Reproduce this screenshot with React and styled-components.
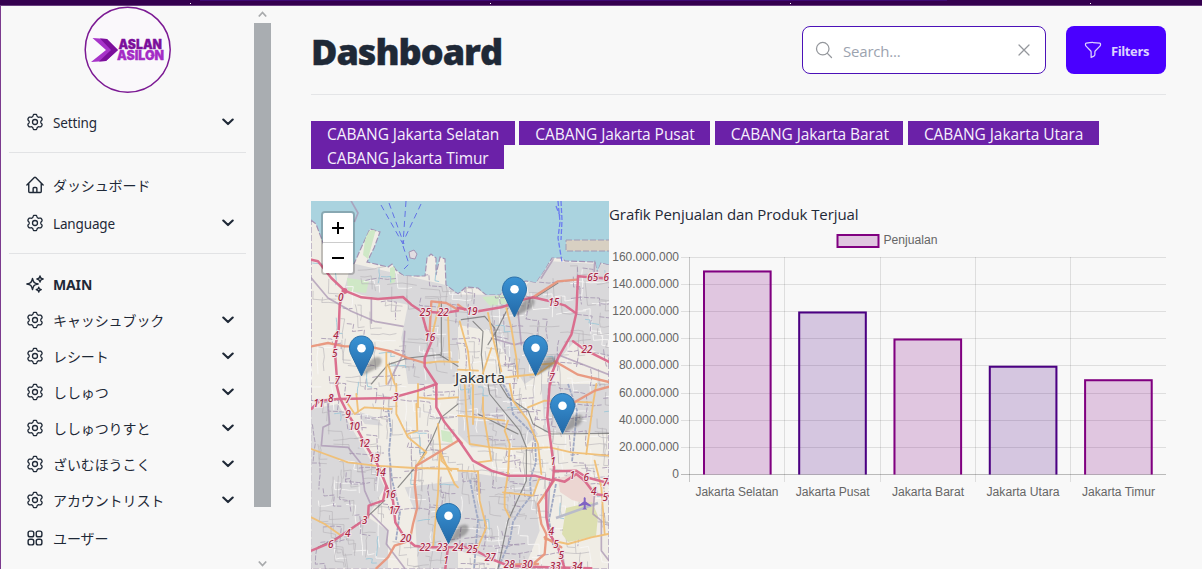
import React from 'react';
import styled, { createGlobalStyle } from 'styled-components';
import {
  HiOutlineHome,
  HiOutlineSparkles,
  HiOutlineSquares2X2,
  HiOutlineFunnel,
  HiOutlineMagnifyingGlass,
  HiOutlineXMark,
} from 'react-icons/hi2';

const GlobalStyle = createGlobalStyle`
  * { box-sizing: border-box; }
  body {
    margin: 0;
    overflow: hidden;
    background: #f8f8f8;
    color: #1f2937;
    font-family: 'Open Sans', 'Noto Sans', 'Noto Sans CJK JP', sans-serif;
  }
  button, input { font: inherit; }
`;

const Page = styled.div`
  display: flex;
  flex-direction: column;
  height: 569px;
  overflow: hidden;
`;

const TopStrip = styled.header`
  flex: none;
  height: 6px;
  background:
    radial-gradient(circle at 0.5px 0.5px, #ffffff 0.6px, transparent 0.9px) 190px 3px / 300px 6px repeat-x,
    linear-gradient(#3f0a74, #3f0a74) 200px 0 / 747px 1px no-repeat,
    #35004f;
  border-bottom: 1px solid #6a3f80;
`;

const Body = styled.div`
  display: flex;
  flex: 1;
  min-height: 0;
  border-left: 1px solid #7b3a8e;
`;

const Sidebar = styled.aside`
  display: flex;
  flex-direction: column;
  width: 253px;
  padding: 0 8px;
`;

const LogoBox = styled.div`
  display: flex;
  justify-content: center;
  height: 92px;
  svg { display: block; }
`;

const Divider = styled.hr`
  width: 100%;
  height: 1px;
  margin: ${(p) => p.$margin};
  border: 0;
  background: #e2e3e5;
`;

const NavRow = styled.a`
  display: flex;
  align-items: center;
  flex: none;
  height: ${(p) => p.$height || 36}px;
  padding: 0 12px 0 16px;
  font-family: ${(p) => (p.$cjk ? "'Noto Sans CJK JP'" : "'Noto Sans'")}, sans-serif;
  font-size: ${(p) => (p.$cjk || p.$bold ? 14 : 13.5)}px;
  font-weight: ${(p) => (p.$bold ? 700 : 400)};
  letter-spacing: ${(p) => (p.$cjk ? '-0.1px' : '-0.15px')};
`;

const NavIcon = styled.span`
  display: flex;
  flex: none;
  align-items: center;
  justify-content: center;
  width: 20px;
  svg { width: ${(p) => p.$size || 20}px; height: ${(p) => p.$size || 20}px; stroke-width: 1.7; }
`;

const NavText = styled.span`
  flex: 1;
  padding: ${(p) => (p.$cjk ? '0 0 1px 8px' : '1px 0 0 8px')};
  white-space: nowrap;
`;

const ScrollTrack = styled.div`
  display: flex;
  flex-direction: column;
  align-items: center;
  justify-content: space-between;
  width: 17px;
  padding: 4px 0 1px;
  color: #a8aaac;
  svg { display: block; }
`;

const ScrollThumb = styled.div`
  width: 17px;
  height: 484px;
  margin-top: 5px;
  margin-bottom: auto;
  background: #a9adb1;
`;

const Main = styled.main`
  flex: 1;
  min-width: 0;
  padding: 20px 36px 0 40px;
`;

const TitleBar = styled.div`
  display: flex;
  align-items: flex-start;
  height: 69px;
  border-bottom: 1px solid #e4e5e7;
`;

const Title = styled.h1`
  flex: 1;
  margin: 0;
  font-size: 36px;
  line-height: 52px;
  font-weight: 800;
  letter-spacing: -1px;
  -webkit-text-stroke: 0.4px #1f2937;
`;

const SearchBox = styled.label`
  display: flex;
  align-items: center;
  width: 244px;
  height: 48px;
  margin-right: 20px;
  padding: 0 11px;
  border: 1px solid #4c12b8;
  border-radius: 8px;
  background: #ffffff;
  color: #94979c;
  svg { flex: none; width: 20px; height: 20px; stroke-width: 1.5; }
`;

const SearchInput = styled.input`
  flex: 1;
  min-width: 0;
  padding: 2px 8px 0 9px;
  border: 0;
  outline: 0;
  background: transparent;
  font-size: 15px;
  letter-spacing: -0.2px;
  &::placeholder { color: #9ca3af; opacity: 1; }
`;

const FilterButton = styled.button`
  display: flex;
  align-items: center;
  gap: 8px;
  width: 100px;
  height: 48px;
  padding: 0 17px;
  border: 0;
  border-radius: 8px;
  background: #4a00ff;
  color: #dcd2ff;
  font-size: 13px;
  font-weight: 700;
  letter-spacing: -0.4px;
  svg { flex: none; width: 20px; height: 20px; }
  span { padding-top: 1px; }
`;

const BranchList = styled.div`
  display: flex;
  flex-wrap: wrap;
  column-gap: 4.5px;
  margin-top: 26px;
  margin-bottom: 32px;
`;

const Branch = styled.div`
  width: ${(p) => p.$width}px;
  height: 24px;
  padding: 2px 0 0 16px;
  overflow: hidden;
  background: #6b21a8;
  color: #f6effc;
  font-size: 15.5px;
  line-height: 23px;
  letter-spacing: -0.07px;
  white-space: nowrap;
`;

const Panels = styled.div`
  display: flex;
`;

const MapPanel = styled.div`
  position: relative;
  flex: none;
  width: 298px;
  height: 368px;
  overflow: hidden;
  svg { display: block; }
`;

const ZoomControl = styled.div`
  position: absolute;
  top: 10px;
  left: 10px;
  border: 2px solid rgba(0, 0, 0, 0.2);
  border-radius: 4px;
  background-clip: padding-box;
`;

const ZoomButton = styled.button`
  display: flex;
  align-items: center;
  justify-content: center;
  width: 30px;
  height: 30px;
  padding: 0;
  border: 0;
  border-bottom: ${(p) => (p.$first ? '1px solid #ccc' : '0')};
  border-radius: ${(p) => (p.$first ? '2px 2px 0 0' : '0 0 2px 2px')};
  background: #fff;
`;

const ChartPanel = styled.section`
  flex: 1;
  min-width: 0;
  svg { display: block; }
`;

const ChartTitle = styled.div`
  height: 27px;
  padding-top: 1px;
  font-size: 15px;
  line-height: 24px;
  letter-spacing: -0.07px;
  white-space: nowrap;
`;

const Logo = () => (
  <svg width="88" height="88" viewBox="0 0 88 88">
    <circle cx="43.700" cy="43.700" r="42.500" fill="#faf8fb" stroke="#7c1a94" strokeWidth="1.500" />
    <path d="M8.500 32 L23 33 L34 44 L22 55 L7 56 L22 44 Z" fill="#a733c9" />
    <path d="M16 32.500 L23 33 L34 44 L22 55 L15 55.500 L27 44 Z" fill="#7c109b" />
    <g fontFamily="Inter, sans-serif" fontWeight="900" fontSize="12.500" strokeWidth="0.300">
      <text x="34.500" y="43" textLength="43.500" lengthAdjust="spacingAndGlyphs" fill="#7c109b" stroke="#7c109b">ASLAN</text>
      <text x="33" y="53.800" textLength="47" lengthAdjust="spacingAndGlyphs" fill="#a42cc6" stroke="#a42cc6">ASILON</text>
    </g>
    <rect x="66.500" y="48.700" width="4" height="1.200" fill="#a42cc6" />
  </svg>
);

// Six rounded teeth, the first pointing straight up.
const COG_OUTLINE = Array.from({ length: 96 }, (_, i) => {
  const a = (i / 96) * Math.PI * 2;
  const wave = -Math.cos(6 * a);
  const r = 6.7 + 1.05 * Math.tanh(1.6 * wave + 0.3) ;
  return `${i ? 'L' : 'M'}${(10 + r * Math.cos(a)).toFixed(2)} ${(10 + r * Math.sin(a)).toFixed(2)}`;
}).join('') + 'Z';

const Cog = () => (
  <svg viewBox="0 0 20 20" fill="none" stroke="currentColor" strokeLinejoin="round">
    <path d={COG_OUTLINE} strokeWidth="1.300" />
    <circle cx="10" cy="10" r="2.500" strokeWidth="1.300" />
  </svg>
);

const Chevron = () => (
  <svg width="12" height="8" viewBox="0 0 12 8" fill="none" stroke="#1f2937" strokeWidth="2.100" strokeLinecap="round" strokeLinejoin="round">
    <path d="M1.300 1.600 L6 6.100 L10.700 1.600" />
  </svg>
);

const NAV = [
  { icon: Cog, text: 'Setting', more: true, height: 48 },
  { rule: '6px 0 13px' },
  { icon: HiOutlineHome, text: 'ダッシュボード', cjk: true, height: 38 },
  { icon: Cog, text: 'Language', more: true, height: 38 },
  { rule: '11px 0 12px' },
  { icon: HiOutlineSparkles, text: 'MAIN', bold: true },
  { icon: Cog, text: 'キャッシュブック', cjk: true, more: true },
  { icon: Cog, text: 'レシート', cjk: true, more: true },
  { icon: Cog, text: 'ししゅつ', cjk: true, more: true },
  { icon: Cog, text: 'ししゅつりすと', cjk: true, more: true },
  { icon: Cog, text: 'ざいむほうこく', cjk: true, more: true },
  { icon: Cog, text: 'アカウントリスト', cjk: true, more: true },
  { icon: HiOutlineSquares2X2, text: 'ユーザー', cjk: true, height: 40 },
];

const BRANCHES = [
  { name: 'CABANG Jakarta Selatan', width: 203.8 },
  { name: 'CABANG Jakarta Pusat', width: 191 },
  { name: 'CABANG Jakarta Barat', width: 188.6 },
  { name: 'CABANG Jakarta Utara', width: 191 },
  { name: 'CABANG Jakarta Timur', width: 193 },
];

const COAST =
  'M311,220 L316,224 L322,240 L330,262 L346,268 L354,264 L362,246 L370,229 L380,232 L374,248 L367,262 L388,267 L392,264 L396,270 L404,276 L425,276 L427,258 L431,254 L436,258 L436,275 L440,257 L445,259 L446,285 L458,294 L466,287 L478,288 L486,295 L501,295 L503,287 L526,281 L536,283 L545,270 L552,258 L562,258 L565,261 L595,262 L597,273 L601,263 L609,265 L609,569 L311,569 Z';

// Deterministic side-street network drawn under the main roads.
const makeStreets = (seed, count, step) => {
  let s = seed;
  const rnd = () => {
    s = (s * 16807) % 2147483647;
    return s / 2147483647;
  };
  let d = '';
  for (let i = 0; i < count; i += 1) {
    let x = 311 + rnd() * 298;
    let y = 262 + rnd() * 307;
    d += `M${x.toFixed(1)},${y.toFixed(1)}`;
    let vertical = rnd() > 0.5;
    for (let k = 0; k < 4; k += 1) {
      const along = (rnd() * 0.7 + 0.4) * step;
      const across = (rnd() - 0.5) * step * 0.3;
      x += vertical ? across : along;
      y += vertical ? along : across;
      if (rnd() > 0.6) vertical = !vertical;
      d += `L${x.toFixed(1)},${y.toFixed(1)}`;
    }
  }
  return d;
};

const STREETS_LIGHT = makeStreets(71, 110, 10);
const STREETS_GREY = makeStreets(913, 260, 9);
const STREETS_MAUVE = makeStreets(4021, 130, 11);
const STREAMS = makeStreets(555, 34, 6);

// Each sheet covers a quarter of the map; its coordinates are thirds of a pixel.
const SHEETS = [
  {
    x: 308,
    y: 198,
    grey: ['M130,195 L300,235 L410,260 L450,290 L450,558 L300,558 L280,420 L300,320 L160,290 L110,270 Z'],
    rail: ['M450,505 L395,470 L300,480 L240,500 L190,558', 'M400,310 L400,470'],
    border: ['M130,10 L150,45 L140,70', 'M10,240 L60,300 L130,340 L200,370 L285,385', 'M290,400 L285,470 L240,558', 'M190,300 L190,375'],
    yellow: ['M235,465 L235,558', 'M350,495 L395,490 L450,492', 'M395,315 L375,400', 'M420,350 L425,490', 'M240,500 L260,558'],
    orange: ['M10,445 L60,435 L110,445 L180,445 L250,460 L300,480 L350,495', 'M365,400 L370,310 L415,315 L450,335'],
    red: ['M10,185 L30,190 L70,240 L110,278 L160,298 L210,303 L285,297 L310,320 L340,340 L405,345 L450,338', 'M108,278 L95,320 L92,400 L80,450 L88,558', 'M340,340 L355,395 L375,420 L350,480 L350,505 L385,558'],
    labels: [['0', 98, 308], ['25', 352, 353], ['22', 406, 353], ['16', 365, 428], ['4', 84, 424], ['5', 80, 477], ['7', 88, 558]],
  },
  {
    x: 458,
    y: 198,
    grey: ['M0,290 L80,290 L205,260 L280,190 L453,200 L453,480 L350,430 L290,500 L200,558 L100,400 L0,380 Z'],
    rail: ['M10,365 L80,355 L110,390 L130,558', 'M150,330 L115,400 L90,440', 'M230,300 L300,255', 'M45,370 L75,400 L70,470 L80,558'],
    border: ['M100,420 L170,440 L210,430', 'M285,185 L250,240', 'M410,190 L408,240', 'M300,470 L453,530', 'M180,340 L190,440'],
    yellow: ['M145,330 L160,390 L175,480 L180,540', 'M5,370 L30,460 L40,558', 'M90,345 L105,420 L130,520', 'M0,515 L60,518', 'M240,500 L300,495', 'M120,540 L240,528 L285,495', 'M70,540 L100,450'],
    orange: ['M225,298 L260,275 L300,250 L355,245', 'M0,320 L20,335', 'M290,490 L360,530 L453,552'],
    red: ['M0,330 L60,340 L130,328 L205,302 L225,298 L270,308 L320,322 L353,345', 'M453,242 L360,235 L355,345 L340,410 L300,480 L280,530 L277,558', 'M345,430 L380,455 L453,492'],
    labels: [['19', 42, 352], ['15', 287, 324], ['65', 404, 249], ['6', 445, 249], ['22', 387, 466], ['7', 282, 550]],
  },
  {
    x: 308,
    y: 384,
    grey: ['M10,75 L90,60 L130,130 L200,250 L230,310 L180,400 L240,440 L240,553 L10,553 Z', 'M145,80 L200,100 L225,125 L170,120 Z', 'M290,310 L450,290 L450,553 L330,553 L320,380 Z'],
    rail: ['M450,60 L400,100 L370,170 L330,240 L270,310', 'M230,350 L170,405 L100,455 L30,490'],
    border: ['M60,60 L65,120 L45,130 L40,185 L120,190 L160,240 L170,320 L190,365', 'M190,390 L240,440 L235,480 L290,553', 'M245,250 L250,330'],
    yellow: ['M10,195 L120,235 L200,245 L320,252 L450,255', 'M110,45 L140,90 L170,70 L250,75', 'M265,0 L265,90 L300,160 L355,205 L325,245', 'M330,0 L330,70', 'M395,200 L390,330 L375,490', 'M10,400 L50,420 L100,455', 'M395,200 L440,300 L450,310', 'M330,40 L380,45 L450,40', 'M145,30 L150,80', 'M390,120 L400,230 L430,260', 'M325,60 L328,140 L300,150'],
    orange: ['M450,170 L400,200 L325,245 L320,300 L328,370 L315,420 L305,470 L260,485 L240,520 L205,553'],
    red: ['M85,0 L95,40 L120,90 L150,140 L180,195 L205,235 L225,280 L235,305 L255,350 L262,415 L290,460 L320,485 L350,490 L450,490', 'M10,75 L35,50 L90,45 L250,42 L330,20 L385,0', 'M385,0 L385,70 L410,115 L450,165', 'M10,500 L70,475 L165,410 L180,400 L182,365 L225,350 L235,305', 'M420,490 L412,553'],
    labels: [['11', 32, 68], ['8', 68, 54], ['7', 120, 56], ['3', 263, 51], ['9', 120, 101], ['10', 139, 137], ['12', 169, 188], ['13', 199, 235], ['14', 217, 275], ['16', 247, 341], ['17', 259, 390], ['3', 170, 419], ['4', 119, 459], ['6', 68, 491], ['20', 293, 474], ['22', 351, 500], ['23', 403, 500], ['1', 414, 541]],
  },
  {
    x: 458,
    y: 384,
    grey: ['M0,0 L140,0 L240,150 L200,190 L40,190 L0,150 Z', 'M250,0 L453,0 L453,150 L260,145 Z', 'M0,260 L130,280 L240,280 L230,340 L245,440 L200,553 L0,500 Z'],
    rail: ['M90,0 L95,30 L185,140 L205,190 L205,290 L150,410 L120,553', 'M125,0 L150,40 L210,80 L225,120 L280,150 L453,148', 'M60,90 L180,150'],
    border: ['M410,320 L405,390 L430,410 L430,500 L453,530', 'M275,295 L270,400'],
    yellow: ['M20,0 L25,90 L35,180 L100,190 L155,195 L270,190', 'M155,0 L165,50 L210,110 L240,180 L250,270', 'M150,110 L140,140 L155,180 L150,270 L140,330 L140,370 L155,400', 'M60,262 L65,350 L85,430 L55,500', 'M0,260 L60,262', 'M275,190 L340,205 L453,215', 'M210,70 L260,50 L400,55', 'M415,0 L405,60 L385,210', 'M135,325 L225,335 L245,280', 'M75,40 L75,80 L100,230 L60,235', 'M260,465 L330,480 L400,460 L450,450', 'M410,230 L430,310 L440,450', 'M0,95 L60,100 L140,110', 'M45,0 L45,120'],
    orange: ['M288,290 L240,360 L250,420 L265,450 L260,510 L210,553', 'M0,165 L12,178', 'M340,60 L410,20 L453,8', 'M260,460 L310,490', 'M150,542 L240,540'],
    red: ['M0,165 L45,230 L100,260 L150,275 L230,275 L285,290', 'M275,0 L268,100 L280,190 L288,250 L285,290 L265,325 L265,400 L275,450 L300,490 L320,553', 'M288,262 L355,260 L385,280 L453,298', 'M285,285 L320,293 L355,270 L380,290 L410,330 L453,336', 'M0,485 L45,495 L100,525 L150,545 L210,548 L400,553'],
    labels: [['24', 0, 500], ['25', 43, 506], ['27', 97, 532], ['28', 154, 551], ['30', 208, 552], ['1', 285, 243], ['1', 343, 286], ['6', 385, 291], ['7', 442, 307], ['4', 407, 333], ['5', 442, 350], ['4', 280, 453], ['5', 294, 492], ['5', 310, 526], ['33', 292, 558], ['34', 357, 558]],
  },
];

const STROKES = [
  ['border', '#aa96b3', 5, 0.75],
  ['rail', '#6d6d6d', 3.5, 0.75],
  ['yellow', '#f0bf74', 5.5, 0.95],
  ['orange', '#e8967c', 7, 0.95],
  ['red', '#d9688a', 7.5, 0.95],
];

const PINS = [
  [514.5, 317.5],
  [361.5, 376.5],
  [535.5, 376],
  [562.5, 434],
  [448.5, 544],
];

const Pin = ({ x, y }) => (
  <g transform={`translate(${x - 12.5} ${y - 41})`}>
    <path d="M12.500 40.500 L19 28 Q25 20 31 22 Q35 26 29 32 Z" fill="#333" opacity="0.350" filter="url(#pin-blur)" />
    <path
      d="M12.500 0.500 C5.800 0.500 0.500 5.900 0.500 12.600 C0.500 16.400 2 19 3.800 22.500 L12.500 40.500 L21.200 22.500 C23 19 24.500 16.400 24.500 12.600 C24.500 5.900 19.200 0.500 12.500 0.500 Z"
      fill="url(#pin-fill)"
      stroke="#2a6fa8"
    />
    <circle cx="12.500" cy="12.700" r="4.300" fill="#fff" />
  </g>
);

const CityMap = () => (
  <svg width="298" height="368" viewBox="311 201 298 368">
    <defs>
      <clipPath id="land">
        <path d={COAST} />
      </clipPath>
      <linearGradient id="pin-fill" x1="0" y1="0" x2="0" y2="1">
        <stop offset="0" stopColor="#3a93d4" />
        <stop offset="1" stopColor="#2369a8" />
      </linearGradient>
      <filter id="pin-blur" x="-20%" y="-20%" width="140%" height="140%">
        <feGaussianBlur stdDeviation="1.200" />
      </filter>
    </defs>
    <rect x="311" y="201" width="298" height="368" fill="#aad3df" />
    <path d={COAST} fill="#f0ede6" stroke="#a394b4" strokeWidth="1.200" strokeDasharray="6 2" />
    <g clipPath="url(#land)">
      {SHEETS.map((s) => (
        <g key={`${s.x}-${s.y}`} transform={`translate(${s.x} ${s.y}) scale(0.33333)`} fill="#d9d8da">
          {s.grey.map((d) => <path key={d} d={d} />)}
        </g>
      ))}
      <path d="M347,278 l22,3 l-3,12 l-18,-2z M441,430 l10,2 l2,11 l-11,-2z M482,297 l25,-2 l3,8 l-20,3z M390,268 l5,-2 v16 l-5,2z M366,232 l10,-3 l-8,30 l-5,-4z" fill="#cfe8c6" />
      <path d={STREETS_LIGHT} fill="none" stroke="#f7f6f5" strokeWidth="0.900" />
      <path d={STREETS_GREY} fill="none" stroke="#b5b2b7" strokeWidth="0.600" />
      <path d={STREETS_MAUVE} fill="none" stroke="#a394b0" strokeWidth="0.800" strokeDasharray="5 1.500" />
      <path d={STREAMS} fill="none" stroke="#9dc7d8" strokeWidth="0.900" />
      <path d="M558,478 l18,-4 l12,6 l8,14 l-2,12 l-22,-6 l-12,-8z" fill="#ecd6d2" />
      <path d="M566,508 l26,-6 l6,14 l-2,20 l-28,6 l-6,-8z" fill="#dcdfb0" />
      <path d="M556,518 L598,503" stroke="#b9bbc9" strokeWidth="2.500" />
      <path
        d="M503,384 L510,397 L513,414 L523,424 L535,436 L536,462 L530,480 L531,496 L520,510 L513,522 L510,540 L498,569 M388,408 L391,430 L389,452 L392,480 L400,512 L396,540 M568,384 L577,410 L572,462 M470,480 L478,520 L474,569 M556,484 L549,520 L553,545"
        fill="none"
        stroke="#a0a9c4"
        strokeWidth="1.800"
        strokeDasharray="4 1"
      />
    </g>
    <rect x="566" y="240" width="46" height="11" fill="#d8d0c2" stroke="#a09ab4" strokeDasharray="6 2" />
    <path d="M409,252 l5,-2 l3,4 l-2,5 l-5,-1z" fill="#e2dde2" stroke="#a394b4" />
    <path d="M381,205 L403,244 M389,203 L404,244 M406,201 L403,244 M421,204 L403,242 M403,246 L409,264 L403,270" fill="none" stroke="#6272e6" strokeDasharray="6 4" />
    <path d="M558,201 L560,222 L558,238 L562,262 M561,201 L562,220 L561,240 M556,206 L560,216" fill="none" stroke="#6b7cf0" strokeWidth="1.300" strokeDasharray="5 2" />
    {SHEETS.map((s) => (
      <g key={`${s.x}-${s.y}`} transform={`translate(${s.x} ${s.y}) scale(0.33333)`} fill="none" strokeLinejoin="round" strokeLinecap="round">
        {STROKES.map(([kind, color, width, opacity]) =>
          s[kind].map((d) => <path key={kind + d} d={d} stroke={color} strokeWidth={width} opacity={opacity} />),
        )}
      </g>
    ))}
    <circle cx="344.500" cy="291" r="3" fill="#d9688a" />
    {SHEETS.map((s) => (
      <g
        key={`${s.x}-${s.y}`}
        transform={`translate(${s.x} ${s.y}) scale(0.33333)`}
        fill="#a82745"
        stroke="#f0e4e8"
        strokeWidth="6"
        paintOrder="stroke"
        fontFamily="'Noto Sans', sans-serif"
        fontStyle="italic"
        fontSize="30"
        fontWeight="500"
        textAnchor="middle"
      >
        {s.labels.map(([t, x, y]) => <text key={`${t}-${x}-${y}`} x={x} y={y}>{t}</text>)}
      </g>
    ))}
    <path d="M584.500,497 l1.200,1 v3.500 l5,3.500 v1.500 l-5,-1.500 v3 l1.500,1.500 h-5 l1.500,-1.500 v-3 l-5,1.500 v-1.500 l5,-3.500 v-3.500z" fill="#8063c4" />
    <text x="480" y="383" textAnchor="middle" fontFamily="'Noto Sans', sans-serif" fontSize="14" textLength="50" lengthAdjust="spacingAndGlyphs" fill="#333" stroke="#f4f2ee" strokeWidth="2.500" paintOrder="stroke">
      Jakarta
    </text>
    {PINS.map(([x, y]) => <Pin key={`${x}-${y}`} x={x} y={y} />)}
  </svg>
);

const TICKS = [
  ['160.000.000', 257.5],
  ['140.000.000', 284.5],
  ['120.000.000', 311.5],
  ['100.000.000', 338.5],
  ['80.000.000', 365.5],
  ['60.000.000', 393.5],
  ['40.000.000', 420.5],
  ['20.000.000', 447.5],
  ['0', 474.5],
];

const BARS = [
  { label: 'Jakarta Selatan', x: 703, top: 270.4, mid: 737, width: 83 },
  { label: 'Jakarta Pusat', x: 798.2, top: 311.5, mid: 832.7, width: 74 },
  { label: 'Jakarta Barat', x: 893.5, top: 338.6, mid: 928, width: 72 },
  { label: 'Jakarta Utara', x: 988.8, top: 365.7, mid: 1023, width: 73 },
  { label: 'Jakarta Timur', x: 1084.1, top: 379.3, mid: 1118.5, width: 73 },
];

const SalesChart = () => (
  <svg width="557" height="280" viewBox="609 228 557 280" fontFamily="'Liberation Sans', sans-serif" fontSize="12" fill="#666">
    <rect x="837.500" y="235" width="41" height="12" fill="rgba(128,0,128,0.2)" stroke="#800080" strokeWidth="2" />
    <text x="883.500" y="244" textLength="54" lengthAdjust="spacingAndGlyphs">Penjualan</text>
    {TICKS.map(([label, y]) => (
      <g key={label}>
        <path d={`M681,${y} H1166`} stroke={label === '0' ? 'rgba(0,0,0,0.25)' : 'rgba(0,0,0,0.1)'} />
        <text x="679" y={y + 3} textAnchor="end">{label}</text>
      </g>
    ))}
    <path d="M689.500,257 V482" stroke="rgba(0,0,0,0.2)" />
    <path d="M784.500,257 V482 M880.500,257 V482 M975.500,257 V482 M1070.500,257 V482" stroke="rgba(0,0,0,0.1)" />
    {BARS.map((b, i) => {
      const odd = i % 2 === 1;
      return (
        <g key={b.label}>
          <rect x={b.x} y={b.top} width="68.600" height={474.5 - b.top} fill={odd ? 'rgba(75,0,130,0.2)' : 'rgba(128,0,128,0.2)'} />
          <path d={`M${b.x + 1},474.500 V${b.top + 1} H${b.x + 67.6} V474.500`} fill="none" stroke={odd ? '#4b0082' : '#800080'} strokeWidth="2" />
          <text x={b.mid} y="496" textAnchor="middle" textLength={b.width} lengthAdjust="spacingAndGlyphs">{b.label}</text>
        </g>
      );
    })}
  </svg>
);

export default function App() {
  return (
    <Page>
      <GlobalStyle />
      <TopStrip />
      <Body>
        <Sidebar>
          <LogoBox>
            <Logo />
          </LogoBox>
          {NAV.map((item) => {
            if (item.rule) return <Divider key={item.rule} $margin={item.rule} />;
            const Icon = item.icon;
            return (
              <NavRow key={item.text} $height={item.height} $bold={item.bold} $cjk={item.cjk}>
                <NavIcon>
                  <Icon />
                </NavIcon>
                <NavText $cjk={item.cjk}>{item.text}</NavText>
                {item.more && <Chevron />}
              </NavRow>
            );
          })}
        </Sidebar>
        <ScrollTrack>
          <svg width="9" height="8" viewBox="0 0 9 8"><path d="M0.800 6.500 L4.500 2.500 L8.200 6.500" fill="none" stroke="currentColor" strokeWidth="1.800" /></svg>
          <ScrollThumb />
          <svg width="9" height="8" viewBox="0 0 9 8"><path d="M0.800 1.500 L4.500 5.500 L8.200 1.500" fill="none" stroke="currentColor" strokeWidth="1.800" /></svg>
        </ScrollTrack>
        <Main>
          <TitleBar>
            <Title>Dashboard</Title>
            <SearchBox>
              <HiOutlineMagnifyingGlass />
              <SearchInput placeholder="Search..." />
              <HiOutlineXMark />
            </SearchBox>
            <FilterButton>
              <HiOutlineFunnel />
              <span>Filters</span>
            </FilterButton>
          </TitleBar>
          <BranchList>
            {BRANCHES.map((b) => (
              <Branch key={b.name} $width={b.width}>{b.name}</Branch>
            ))}
          </BranchList>
          <Panels>
            <MapPanel>
              <CityMap />
              <ZoomControl>
                <ZoomButton $first aria-label="Zoom in">
                  <svg width="14" height="14" viewBox="0 0 14 14"><path d="M1 7 H13 M7 1 V13" stroke="#000" strokeWidth="2" /></svg>
                </ZoomButton>
                <ZoomButton aria-label="Zoom out">
                  <svg width="14" height="14" viewBox="0 0 14 14"><path d="M1 7 H13" stroke="#000" strokeWidth="2" /></svg>
                </ZoomButton>
              </ZoomControl>
            </MapPanel>
            <ChartPanel>
              <ChartTitle>Grafik Penjualan dan Produk Terjual</ChartTitle>
              <SalesChart />
            </ChartPanel>
          </Panels>
        </Main>
      </Body>
    </Page>
  );
}
